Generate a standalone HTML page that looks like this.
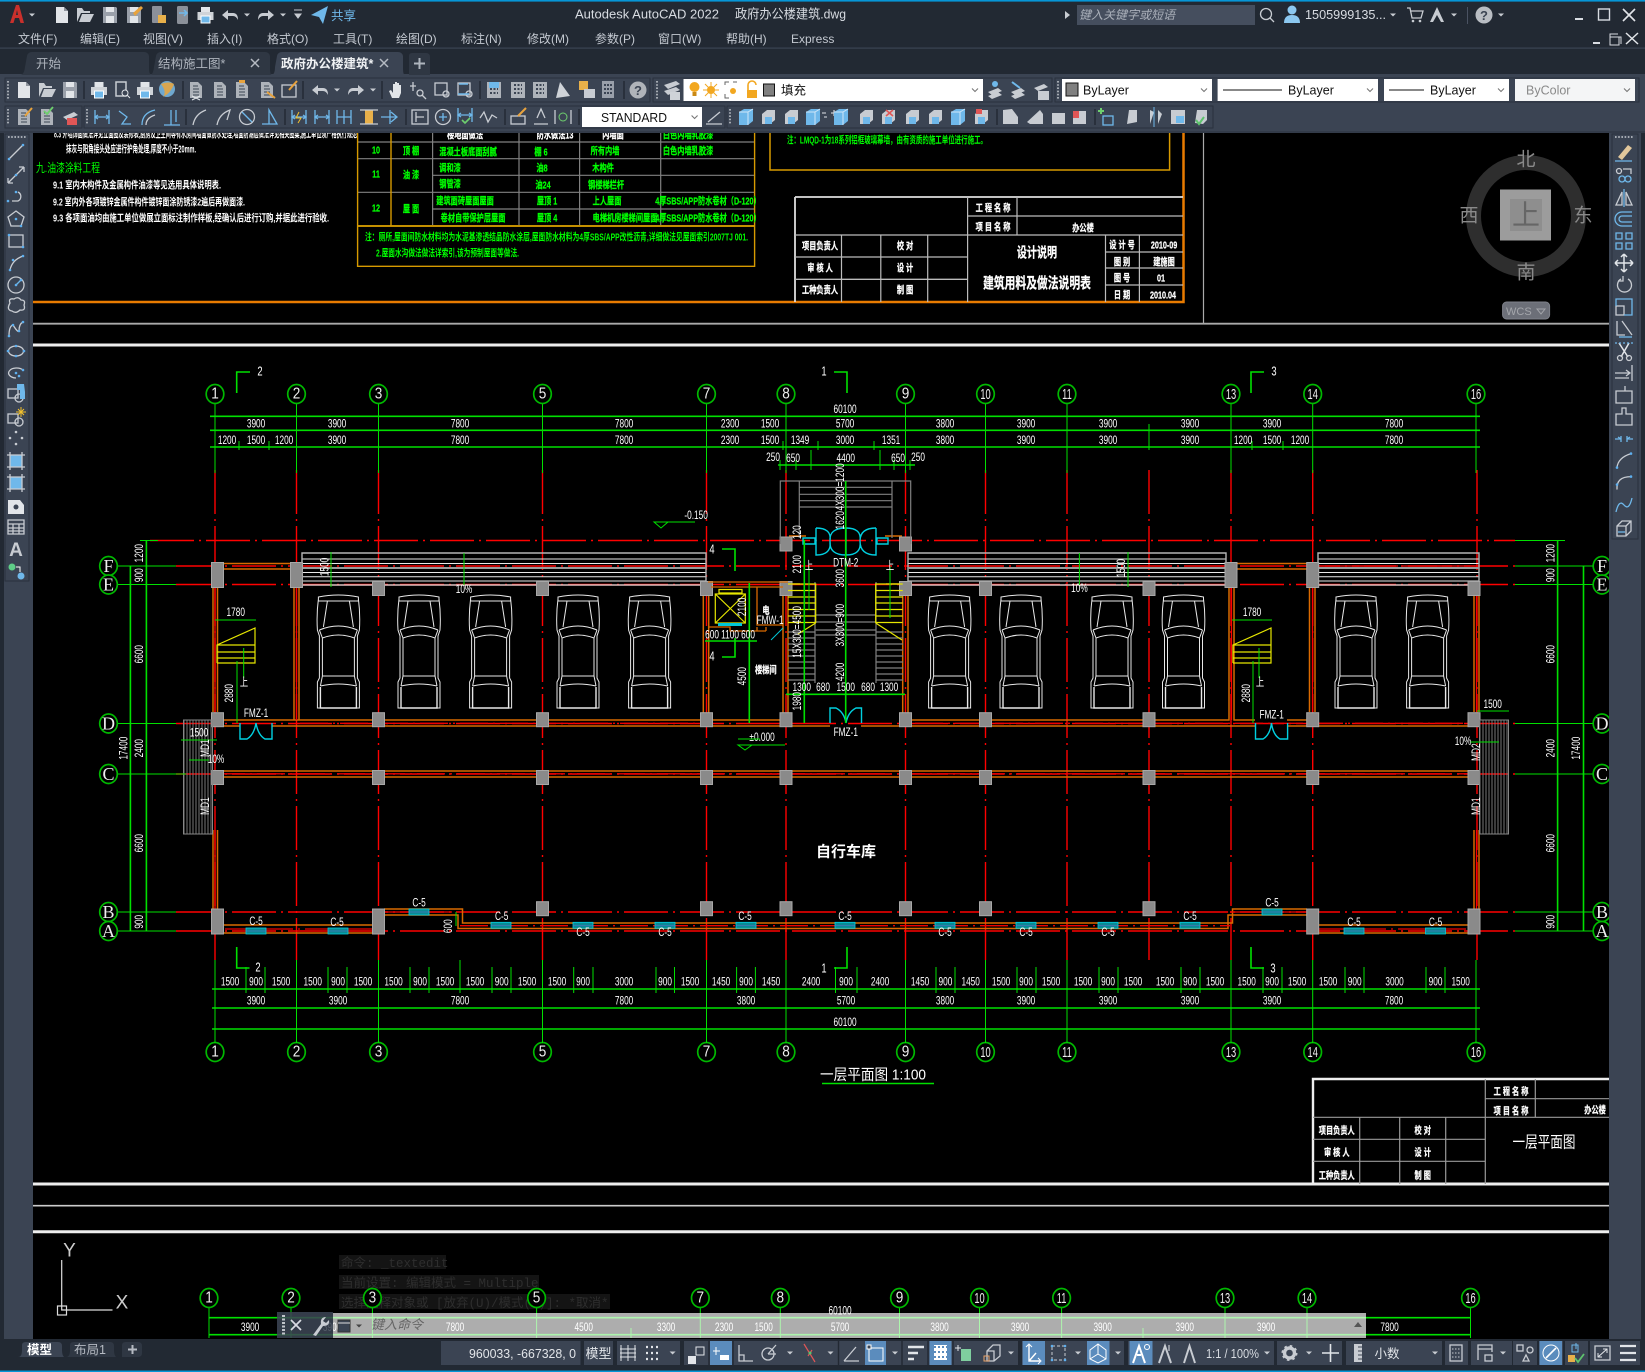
<!DOCTYPE html>
<html><head><meta charset="utf-8"><title>Autodesk AutoCAD 2022</title>
<style>
html,body{margin:0;padding:0;background:#000;width:1645px;height:1372px;overflow:hidden}
svg{display:block;font-family:"Liberation Sans","Noto Sans CJK SC",sans-serif}
.g{stroke:#00e000;fill:none;stroke-width:1.6}
.g1{stroke:#00e000;fill:none;stroke-width:1}
.r{stroke:#f00;fill:none;stroke-width:1.4;stroke-dasharray:44 5 2 5}
.o{stroke:#d96a00;fill:none;stroke-width:1.5}
.w{stroke:#e8e8e8;fill:none;stroke-width:1}
.gr{stroke:#808080;fill:none;stroke-width:1.2}
.y{stroke:#e6e600;fill:none;stroke-width:1.2}
.cy{stroke:#00d0e0;fill:none;stroke-width:1.4}
.d,.v,.t,.k,.bt,.bs,.lt{text-anchor:middle;dominant-baseline:central;transform-box:fill-box;transform-origin:center}
.d{font-size:11.5px;fill:#fff;transform:scaleX(.72)}
.v{font-size:11.5px;fill:#fff;transform:rotate(-90deg) scaleX(.72)}
.bt{font-size:16px;fill:#eee;transform:scaleX(.85)}
.bs{font-size:15px;fill:#eee;transform:scaleX(.62)}
.lt{font-family:"Liberation Serif",serif;font-size:18px;fill:#eee}
.t{font-size:10px;font-weight:700;fill:#0f0;stroke:#0f0;stroke-width:.25;transform:scaleX(.72)}
.k{font-size:10px;font-weight:700;fill:#fff;stroke:#fff;stroke-width:.25;transform:scaleX(.72)}
.l{font-size:10px;font-weight:700;dominant-baseline:central}
.i{fill:none;stroke:#c8ccd2;stroke-width:1.3}
.f{fill:#c8ccd2}
.wf{fill:#e2e5e9}
.bf{fill:#6fb8ea}
.bd{fill:none;stroke:#5fb0ef;stroke-width:2.6;stroke-linecap:round}
.bl{fill:none;stroke:#6fb8ea;stroke-width:1.3}
.mn{font-size:12px;fill:#c4c9d1}
.tb{fill:#3b4453;stroke:#2a313d;stroke-width:1}
.sp{stroke:#222933;stroke-width:1.4}
.cb{font-size:12.5px;fill:#111}
.st{font-size:13px;fill:#d8dce2}
</style></head><body>
<svg width="1645" height="1372" viewBox="0 0 1645 1372" xmlns="http://www.w3.org/2000/svg">
<defs>
<g id="b"><ellipse rx="8.8" ry="9.5" fill="#000" stroke="#00b800" stroke-width="1.7"/></g>
<g id="car" fill="none" stroke="#e8e8e8" stroke-width="1"><path d="M1 3Q21-1 41 3V7H1ZM1 5Q-1 20 0 36L2 42V84L0 88V114H42V88L40 84V42L42 36Q43 20 41 5M10 7L6 33M32 7L36 33M2 36Q21 28 40 36M5 44Q21 38 37 44M5 44V82M37 44V82M5 82H37M3 92Q21 88 39 92M3 92L5 82M39 92L37 82M2 36L5 44M40 36L37 44"/><path d="M3 93V114H39V93" stroke-width="1.4"/></g>
<g id="cs"><rect x="-6" y="-7" width="12" height="14" fill="#8a8a8a" stroke="#a8a8a8"/></g>
<g id="cb"><rect x="-6" y="-12.5" width="12" height="25" fill="#8a8a8a" stroke="#a8a8a8"/></g>
<g id="win"><rect width="20" height="6" fill="#0a8a94" stroke="#00d0e0" stroke-width=".8"/><path d="M0 3H20" stroke="#66c" stroke-width=".5"/></g>
<pattern id="st" width="3" height="10" patternUnits="userSpaceOnUse"><path d="M1 0V10" stroke="#777" stroke-width="1"/></pattern>
<g id="nw"><path d="M-6-8H2L6-4V8H-6Z" class="wf"/><path d="M2-8V-4H6Z" fill="#8f959e"/></g>
<g id="op"><path d="M-8 7V-7H-3L-1-4H5V-2H-4L-8 7ZM-6 7L-3-1H9L5 7Z" class="f"/></g>
<g id="sv"><path d="M-7-8H6L7-7V8H-7Z" fill="#9aa0aa"/><rect x="-4" y="-8" width="8" height="5" class="wf"/><rect x="-4" y="1" width="8" height="7" class="wf"/></g>
<g id="pr"><rect x="-4.5" y="-8" width="9" height="5" class="wf"/><rect x="-8" y="-3" width="16" height="8" fill="#cfd3d8"/><rect x="-4.5" y="1" width="9" height="7" class="bf" stroke="#fff"/></g>
<g id="un"><path d="M-8 0L-2-5V-2H3Q8-2 8 5Q6 1 3 1H-2V5Z" class="f"/></g>
<g id="re"><path d="M8 0L2-5V-2H-3Q-8-2-8 5Q-6 1-3 1H2V5Z" class="f"/></g>
<g id="ca"><path d="M-3-1.5H3L0 1.5Z" class="f"/></g>
<g id="ch"><path d="M-3-1.5L0 1.5L3-1.5" fill="none" stroke="#777" stroke-width="1.1"/></g>
<g id="ds"><rect x="-6" y="-8" width="10" height="14" fill="none" stroke="#c8ccd2" stroke-width="1.5"/><circle cx="3" cy="3" r="3" fill="#3b4453" stroke="#e2e5e9"/><path d="M5 5L8 8" stroke="#e2e5e9"/></g>
<g id="dc"><path d="M-6-8H2L6-4V8H-6Z" fill="#aeb3ba"/><path d="M-3-4H2M-3-1H3M-3 2H3M-3 5H3" stroke="#3b4453"/></g>
<g id="vp"><rect x="-7" y="-8" width="14" height="16" fill="#aeb3ba"/><path d="M-4-5H4M-4-1H4M-4 3H4" stroke="#3b4453" stroke-width="2" stroke-dasharray="2 1.5"/></g>
<g id="hd"><path d="M-4 8L-7 1L-5 0L-3 3V-6L-1-6V0V-8H1V0V-7H3V0V-5L5-5V3L3 8Z" class="wf"/></g>
<g id="tl"><path d="M-6-8V1M-9-4H-3" class="i"/><circle cx="1" cy="3" r="3" class="i"/><path d="M3 5L7 9" class="i"/></g>
<g id="rc"><rect x="-7" y="-7" width="12" height="12" class="i"/><circle cx="4" cy="4" r="3" class="i"/></g>
<g id="dm"><path d="M-7-7V7M7-7V7M-7 0H7" class="bl"/><path d="M-4-2L-7 0L-4 2M4-2L7 0L4 2" class="bl"/></g>
<g id="cube"><path d="M-7-5L-2-8H7V4L2 8H-7Z" fill="#6fb8ea"/><path d="M-7-5H2V8M2-5L7-8" fill="none" stroke="#cfe6f8"/></g>
<g id="cube2"><path d="M-7-3L-2-7H6V3L1 7H-7Z" class="f"/><path d="M-4 0H3V7H-4Z" class="bf"/></g>
</defs>
<rect width="1645" height="1372" fill="#000"/>

<!-- upper sheet -->
<g>
<path d="M33 302H1183.5V133" fill="none" stroke="#e87b00" stroke-width="2.5"/>
<path d="M33 323.7H1609" fill="none" stroke="#aaa" stroke-width="1.8"/>
<path d="M1203.5 133V323" fill="none" stroke="#aaa" stroke-width="1.2"/>
<path d="M33 345H1609" fill="none" stroke="#eee" stroke-width="3"/>
<path d="M770 133V170H1169.6V133" fill="none" stroke="#d79a00" stroke-width="1.5"/>
<text class="l" x="787" y="141" fill="#0f0" textLength="200" lengthAdjust="spacingAndGlyphs">注：LMQD-1为18系列铝框玻璃幕墙，由有资质的施工单位进行施工。</text>
<text class="l" x="54" y="135" fill="#fff" textLength="303" lengthAdjust="spacingAndGlyphs">8.3 外墙饰面做法详见立面图及装修表,厨房及卫生间等有水房间墙面做防水处理,墙面防潮层做法详见相关图集,施工单位须严格执行规范</text>
<text class="l" x="66" y="150" fill="#fff" textLength="130" lengthAdjust="spacingAndGlyphs">抹灰与阳角接头处应进行护角处理,厚度不小于20mm.</text>
<text class="l" x="36" y="168" fill="#0f0" textLength="64" lengthAdjust="spacingAndGlyphs" style="font-size:12px;font-weight:400">九.油漆涂料工程</text>
<text class="l" x="53" y="186" fill="#fff" textLength="168" lengthAdjust="spacingAndGlyphs">9.1 室内木构件及金属构件油漆等见选用具体说明表.</text>
<text class="l" x="53" y="203" fill="#fff" textLength="192" lengthAdjust="spacingAndGlyphs">9.2 室内外各项镀锌金属件构件镀锌面涂防锈漆2遍后再做面漆.</text>
<text class="l" x="53" y="219" fill="#fff" textLength="276" lengthAdjust="spacingAndGlyphs">9.3 各项面油均由施工单位做展立面标注制作样板,经确认后进行订购,并据此进行验收.</text>
<path d="M357.6 142H754.6M357.6 158.7H754.6M432.6 175.3H754.6M357.6 192.3H754.6M432.6 209H754.6M432.6 133V226M519 133V226M579.6 133V226M660.7 133V226" class="gr"/>
<path d="M357.6 226H754.6" stroke="#c49000" stroke-width="2"/>
<path d="M357.6 133V266.3H754.6V133M391 133V226" fill="none" stroke="#d79a00" stroke-width="1.4"/>
<text class="k" x="465" y="135">楼地面做法</text><text class="k" x="555" y="135">防水做法13</text><text class="k" x="613" y="135">内墙面</text><text class="t" x="688" y="135">白色内墙乳胶漆</text>
<text class="t" x="376" y="150">10</text><text class="t" x="411" y="151">顶 棚</text><text class="t" x="468" y="152">混凝土板底面刮腻</text><text class="t" x="541" y="152">棚 6</text><text class="t" x="605" y="151">所有内墙</text><text class="t" x="688" y="151">白色内墙乳胶漆</text>
<text class="t" x="376" y="174">11</text><text class="t" x="411" y="175">油 漆</text><text class="t" x="450" y="168">调和漆</text><text class="t" x="542" y="168">油8</text><text class="t" x="603" y="168">木构件</text><text class="t" x="450" y="184">钢管漆</text><text class="t" x="543" y="185">油24</text><text class="t" x="606" y="185">钢楼梯栏杆</text>
<text class="t" x="376" y="208">12</text><text class="t" x="411" y="209">屋 面</text><text class="t" x="465" y="201">建筑面砖屋面屋面</text><text class="t" x="547" y="201">屋顶 1</text><text class="t" x="607" y="201">上人屋面</text><text class="t" x="708" y="201">4厚SBS/APP防水卷材（D-120）</text>
<text class="t" x="473" y="218">卷材自带保护层屋面</text><text class="t" x="547" y="218">屋顶 4</text><text class="t" x="625" y="218">电梯机房楼梯间屋面</text><text class="t" x="708" y="218">4厚SBS/APP防水卷材（D-120）</text>
<text class="l" x="365" y="238" fill="#0f0" textLength="383" lengthAdjust="spacingAndGlyphs">注：厕所,屋面间防水材料均为水泥基渗透结晶防水涂层,屋面防水材料为4厚SBS/APP改性沥青,详细做法见屋面索引2007TJ 001.</text>
<text class="l" x="376" y="254" fill="#0f0" textLength="143" lengthAdjust="spacingAndGlyphs">2.屋面水沟做法做法详索引,该为预制屋面等做法.</text>
<!-- top title block -->
<path d="M795 197H1183M795 197V302" fill="none" stroke="#ddd" stroke-width="1.8"/>
<path d="M967.6 216H1183M795 235H1183M795 257H967.6M795 279.3H967.6M1105.5 252H1183M1105.5 268H1183M1105.5 285H1183" fill="none" stroke="#bbb" stroke-width="1.3"/>
<path d="M967.6 197V302M1017 197V235M841.5 235V302M880.8 235V302M927.7 235V302M1105.5 235V302M1139.4 235V302" fill="none" stroke="#bbb" stroke-width="1.2"/>
<text class="k" x="993" y="208">工 程 名 称</text><text class="k" x="993" y="227">项 目 名 称</text><text class="k" x="1083" y="228">办公楼</text>
<text class="k" x="820" y="246">项目负责人</text><text class="k" x="820" y="268">审 核 人</text><text class="k" x="820" y="290">工种负责人</text>
<text class="k" x="905" y="246">校 对</text><text class="k" x="905" y="268">设 计</text><text class="k" x="905" y="290">制 图</text>
<text class="k" x="1037" y="253" style="font-size:14px">设计说明</text><text class="k" x="1037" y="283" style="font-size:15px">建筑用料及做法说明表</text>
<text class="k" x="1122" y="245">设 计 号</text><text class="k" x="1122" y="262">图 别</text><text class="k" x="1122" y="278">图 号</text><text class="k" x="1122" y="295">日 期</text>
<text class="k" x="1164" y="245">2010-09</text><text class="k" x="1164" y="262">建施图</text><text class="k" x="1161" y="278">01</text><text class="k" x="1163" y="295">2010.04</text>
</g>

<!-- axis lines -->
<path class="r" d="M215 470V960M296.5 470V960M378.5 470V960M542.5 470V960M706.5 470V960M786 470V960M905.5 470V960M985.5 470V960M1067 470V960M1149 470V960M1231 470V960M1312.7 470V960M1477 470V960"/>
<path class="r" d="M150 540.5H1515M176 566H1515M176 584.5H1515M176 723.5H1515M176 774H1515M176 912H1515M176 931H1515"/>
<!-- green verticals top -->
<path class="g1" d="M215 404V473M296.5 404V473M378.5 404V473M542.5 404V473M706.5 404V473M786 404V473M905.5 404V473M985.5 404V473M1067 404V473M1231 404V473M1312.7 404V473M1476 404V473M1149 424V450"/>
<path class="g" d="M210 416.3H1480M210 430.3H1480M210 447H1480M778 465H915"/>
<path class="g1" d="M239 441V450M269 441V450M783 441V450M818 441V450M874 441V450M1252 441V450M1283 441V450M780 460V470M796 460V470M811 460V470M880 460V470M894 460V470M910 460V470M811 450V470M880 450V470"/>
<g><use href="#b" x="215" y="394"/><use href="#b" x="296.5" y="394"/><use href="#b" x="378.5" y="394"/><use href="#b" x="542.5" y="394"/><use href="#b" x="706.5" y="394"/><use href="#b" x="786" y="394"/><use href="#b" x="905.5" y="394"/><use href="#b" x="985.5" y="394"/><use href="#b" x="1067" y="394"/><use href="#b" x="1231" y="394"/><use href="#b" x="1312.7" y="394"/><use href="#b" x="1476" y="394"/>
<use href="#b" x="215" y="1052"/><use href="#b" x="296.5" y="1052"/><use href="#b" x="378.5" y="1052"/><use href="#b" x="542.5" y="1052"/><use href="#b" x="706.5" y="1052"/><use href="#b" x="786" y="1052"/><use href="#b" x="905.5" y="1052"/><use href="#b" x="985.5" y="1052"/><use href="#b" x="1067" y="1052"/><use href="#b" x="1231" y="1052"/><use href="#b" x="1312.7" y="1052"/><use href="#b" x="1476" y="1052"/></g>
<g>
<text class="bt" x="215" y="394">1</text><text class="bt" x="296.5" y="394">2</text><text class="bt" x="378.5" y="394">3</text><text class="bt" x="542.5" y="394">5</text><text class="bt" x="706.5" y="394">7</text><text class="bt" x="786" y="394">8</text><text class="bt" x="905.5" y="394">9</text><text class="bs" x="985.5" y="394">10</text><text class="bs" x="1067" y="394">11</text><text class="bs" x="1231" y="394">13</text><text class="bs" x="1312.7" y="394">14</text><text class="bs" x="1476" y="394">16</text>
<text class="bt" x="215" y="1052">1</text><text class="bt" x="296.5" y="1052">2</text><text class="bt" x="378.5" y="1052">3</text><text class="bt" x="542.5" y="1052">5</text><text class="bt" x="706.5" y="1052">7</text><text class="bt" x="786" y="1052">8</text><text class="bt" x="905.5" y="1052">9</text><text class="bs" x="985.5" y="1052">10</text><text class="bs" x="1067" y="1052">11</text><text class="bs" x="1231" y="1052">13</text><text class="bs" x="1312.7" y="1052">14</text><text class="bs" x="1476" y="1052">16</text>
</g>
<!-- top dim text -->
<g>
<text class="d" x="845" y="410">60100</text>
<text class="d" x="256" y="424.5">3900</text><text class="d" x="337" y="424.5">3900</text><text class="d" x="460" y="424.5">7800</text><text class="d" x="624" y="424.5">7800</text><text class="d" x="730" y="424.5">2300</text><text class="d" x="770" y="424.5">1500</text><text class="d" x="845" y="424.5">5700</text><text class="d" x="945" y="424.5">3800</text><text class="d" x="1026" y="424.5">3900</text><text class="d" x="1108" y="424.5">3900</text><text class="d" x="1190" y="424.5">3900</text><text class="d" x="1272" y="424.5">3900</text><text class="d" x="1394" y="424.5">7800</text>
<text class="d" x="227" y="441">1200</text><text class="d" x="256" y="441">1500</text><text class="d" x="284" y="441">1200</text><text class="d" x="337" y="441">3900</text><text class="d" x="460" y="441">7800</text><text class="d" x="624" y="441">7800</text><text class="d" x="730" y="441">2300</text><text class="d" x="770" y="441">1500</text><text class="d" x="800" y="441">1349</text><text class="d" x="845" y="441">3000</text><text class="d" x="891" y="441">1351</text><text class="d" x="945" y="441">3800</text><text class="d" x="1026" y="441">3900</text><text class="d" x="1108" y="441">3900</text><text class="d" x="1190" y="441">3900</text><text class="d" x="1243" y="441">1200</text><text class="d" x="1272" y="441">1500</text><text class="d" x="1300" y="441">1200</text><text class="d" x="1394" y="441">7800</text>
<text class="d" x="773" y="458">250</text><text class="d" x="793" y="459">650</text><text class="d" x="845.7" y="459">4400</text><text class="d" x="898" y="459">650</text><text class="d" x="918" y="458">250</text>
</g>
<!-- section marks -->
<path class="g" d="M236.7 393V372H250M834 372H847V393M1251 393V372H1264M722 549H735V571M722 657H735V638M236.7 947V968H249.5M834 968H847V947M1251 947V968H1264"/>
<g>
<text class="d" x="260" y="372" style="font-size:13px">2</text><text class="d" x="824" y="372" style="font-size:13px">1</text><text class="d" x="1274" y="372" style="font-size:13px">3</text>
<text class="d" x="258" y="968" style="font-size:13px">2</text><text class="d" x="824" y="969" style="font-size:13px">1</text><text class="d" x="1273" y="969" style="font-size:13px">3</text>
<text class="d" x="712" y="550" style="font-size:13px">4</text><text class="d" x="712" y="657" style="font-size:13px">4</text>
</g>
<!-- eaves -->
<g class="w"><path d="M302 559H706M302 563.5H706M302 572.5H706M302 576.7H706M302 581H706M908 559H1226M908 563.5H1226M908 572.5H1226M908 576.7H1226M908 581H1226M1318 559H1479M1318 563.5H1479M1318 572.5H1479M1318 576.7H1479M1318 581H1479"/></g>
<path d="M302 553H706V585H302ZM908 553H1226V585H908ZM1318 553H1479V585H1318Z" fill="none" stroke="#b5b5b5" stroke-width="1.4"/>
<path d="M302 568H706M908 568H1226M1318 568H1479" stroke="#999" stroke-width="2"/>
<path d="M302 585H706M908 585H1226M1318 585H1479" stroke="#f5c8c8" stroke-width="1"/>
<path d="M1325 566H1470" stroke="#f00" stroke-width="1.2" stroke-dasharray="34 5"/>
<!-- walls -->
<g class="o">
<path d="M223 563.5H291M223 569H291M1237 563.5H1307M1237 569H1307"/>
<path d="M213 587V712M217.5 587V712M294 587V720H217M299 587V720H706M217 726H240M272 726H700M272 720H299"/>
<path d="M1229 587V720H1149M1234 587V720H1255M1287 720H1307M1309.5 587V712M1315 587V712M1255 726H1150M1287 726H1470M1474 590V712M1479 590V712"/>
<path d="M711 720H783M711 726H830M861 726H900M912 720H1143M912 726H1150M703.3 582V714M708.7 582V714M783 582V714M788 582V714M902.7 582V714M908 582V714"/>
<path d="M215 771H1470M215 777H1470"/>
<path d="M213 830V909M217.5 830V909M1474 830V909M1479 830V909M223 925H373M223 933H373M384 909H462.5V923H1232.5V909H1307M384 915H458V928.5H1228V915H1307M1318 925H1470M1318 933H1470"/>
<path d="M789 536H806M885 536H902M792 584H800M886 584H902"/>
</g>
<path d="M215 587V712M296.5 587V720M1231.5 587V720M1312.5 587V712M1476.5 590V712M215 830V909M1476.5 830V909" stroke="#f00" stroke-width="1.3" fill="none"/>
<path d="M300 723.3H700M217 773.8H1470M915 723.3H1470M225 929H373M384 912H460M460 925.7H1230M1230 912H1307M1318 929H1470" stroke="#e00" stroke-width="1.3" fill="none" stroke-dasharray="28 5 2 5"/>
<!-- cars -->
<use href="#car" x="317.4" y="594"/><use href="#car" x="398" y="594"/><use href="#car" x="469.6" y="594"/><use href="#car" x="557" y="594"/><use href="#car" x="628.6" y="594"/><use href="#car" x="928.6" y="594"/><use href="#car" x="1000" y="594"/><use href="#car" x="1091" y="594"/><use href="#car" x="1162.5" y="594"/><use href="#car" x="1335" y="594"/><use href="#car" x="1406.6" y="594"/>
<!-- columns -->
<use href="#cb" x="217.5" y="575"/><use href="#cb" x="296.5" y="575"/><use href="#cb" x="1231" y="575"/><use href="#cb" x="1312.7" y="575"/><use href="#cb" x="217.5" y="921.5"/><use href="#cb" x="378.5" y="921.5"/><use href="#cb" x="1312.7" y="921.5"/><use href="#cb" x="1474" y="921.5"/>
<use href="#cs" x="378.5" y="588.5"/><use href="#cs" x="542.5" y="588.5"/><use href="#cs" x="706.5" y="588.5"/><use href="#cs" x="786" y="588.5"/><use href="#cs" x="905.5" y="588.5"/><use href="#cs" x="985.5" y="588.5"/><use href="#cs" x="1149" y="588.5"/><use href="#cs" x="1474" y="588.5"/>
<use href="#cs" x="786" y="544"/><use href="#cs" x="905.5" y="544"/>
<use href="#cs" x="217.5" y="719.7"/><use href="#cs" x="378.5" y="719.7"/><use href="#cs" x="542.5" y="719.7"/><use href="#cs" x="706.5" y="719.7"/><use href="#cs" x="786" y="719.7"/><use href="#cs" x="905.5" y="719.7"/><use href="#cs" x="985.5" y="719.7"/><use href="#cs" x="1149" y="719.7"/><use href="#cs" x="1312.7" y="719.7"/><use href="#cs" x="1474" y="719.7"/>
<use href="#cs" x="217.5" y="777.5"/><use href="#cs" x="378.5" y="777.5"/><use href="#cs" x="542.5" y="777.5"/><use href="#cs" x="706.5" y="777.5"/><use href="#cs" x="786" y="777.5"/><use href="#cs" x="905.5" y="777.5"/><use href="#cs" x="985.5" y="777.5"/><use href="#cs" x="1149" y="777.5"/><use href="#cs" x="1312.7" y="777.5"/><use href="#cs" x="1474" y="777.5"/>
<use href="#cs" x="542.5" y="908.7"/><use href="#cs" x="706.5" y="908.7"/><use href="#cs" x="786" y="908.7"/><use href="#cs" x="905.5" y="908.7"/><use href="#cs" x="985.5" y="908.7"/><use href="#cs" x="1149" y="908.7"/>
<!-- windows -->
<use href="#win" x="246" y="928"/><use href="#win" x="328" y="928"/><use href="#win" x="409" y="909"/><use href="#win" x="491" y="922.3"/><use href="#win" x="573" y="922.3"/><use href="#win" x="655" y="922.3"/><use href="#win" x="736" y="922.3"/><use href="#win" x="835" y="922.3"/><use href="#win" x="935" y="922.3"/><use href="#win" x="1016" y="922.3"/><use href="#win" x="1098" y="922.3"/><use href="#win" x="1180" y="922.3"/><use href="#win" x="1262" y="909"/><use href="#win" x="1344" y="928"/><use href="#win" x="1425.5" y="928"/>
<g>
<text class="d" x="419" y="903.5">C-5</text><text class="d" x="256" y="922">C-5</text><text class="d" x="337" y="923">C-5</text><text class="d" x="501.6" y="917">C-5</text><text class="d" x="583" y="933">C-5</text><text class="d" x="665" y="933">C-5</text><text class="d" x="745" y="917">C-5</text><text class="d" x="845" y="917">C-5</text><text class="d" x="945" y="933">C-5</text><text class="d" x="1026" y="933">C-5</text><text class="d" x="1108" y="933">C-5</text><text class="d" x="1190" y="917">C-5</text><text class="d" x="1272" y="903.5">C-5</text><text class="d" x="1354" y="923">C-5</text><text class="d" x="1435.5" y="923">C-5</text>
</g>
<!-- left/right steps -->
<rect x="183.5" y="720" width="29" height="114" fill="url(#st)" stroke="#888"/>
<rect x="1479.5" y="720" width="29" height="114" fill="url(#st)" stroke="#888"/>
<!-- yellow stairs -->
<path class="y" d="M217 663H255V628L217 645V663M217 652H255M217 658H255M217 645H255M1233 663H1271V628L1233 645V663M1233 652H1271M1233 658H1271M1233 645H1271"/>
<path class="g1" d="M243.7 648V678M237 661V723M1259 648V678M1253 661V723M215 620H256M1232 620H1272M181 740H217M189 760H209M1477 711H1509M1470 742H1499"/>
<!-- doors -->
<path class="cy" d="M240 723V739H247Q254 735 256 723M272 723V739H265Q258 735 256 723M1255.5 723V739H1263Q1270 735 1271.5 723M1287.6 723V739H1280Q1273 735 1271.5 723M830 723V708H836Q844 712 846 723M861.5 723V708H856Q848 712 846 723"/>
<path class="cy" d="M816 528Q832 528 830 541Q832 555 816 555V528M846 528Q829 528 830 541Q829 555 846 555V528M846 528Q862 528 860 541Q862 555 846 555M876 528Q860 528 860 541Q860 555 876 555V528M803 538H815V544H803ZM877 538H888V544H877Z"/>
<!-- central stair -->
<path class="gr" d="M780.3 544V481H910.7V544M799.3 481V538M892 481V538M799.3 487.3H892M799.3 494.3H892M799.3 500.7H892M799.3 507H892M815.7 615H875.7M815.7 622H875.7M815.7 630H875.7M815.7 635H875.7" stroke-width="1.4"/>
<path class="gr" d="M815 582V683M876 582V683M788 632H815M788 638H815M788 644H815M788 650H815M788 656H815M788 662H815M788 668H815M788 674H815M788 680H815M876 632H903M876 638H903M876 644H903M876 650H903M876 656H903M876 662H903M876 668H903M876 674H903M876 680H903"/>
<path class="y" d="M788 584H815.7V623M788 590.5H815.7M788 597H815.7M788 603H815.7M788 609.5H815.7M788 616H815.7M788 622.5H815.7M815.7 623L798 634M902.7 584H875.7V623M902.7 590.5H875.7M902.7 597H875.7M902.7 603H875.7M902.7 609.5H875.7M902.7 616H875.7M902.7 622.5H875.7M875.7 623L902 640"/>
<path class="g" d="M845.7 481V723M804.3 540V723M786 694.3H905"/>
<path class="g1" d="M809 566V610M890 566V618"/>
<!-- elevator -->
<path d="M708 582H788M711 587H783M708 627H730V631H766M757 627V631M757 587V625H783M766 631V627" stroke="#d96a00" fill="none" stroke-width="1.3"/>
<rect x="715.3" y="594" width="30" height="29" class="y"/><path class="y" d="M715.3 594L745.3 623M745.3 594L715.3 623"/><rect x="719" y="589.5" width="23" height="3.5" class="y"/>
<rect x="718" y="623" width="24" height="3" fill="#00c8d8"/>
<path class="g" d="M705 641H757M749.3 583V723"/>
<path stroke="#00c8d8" d="M771 640L783 628" stroke-width="1"/>
<!-- misc dim text -->
<g>
<text class="d" x="235.7" y="613">1780</text><text class="d" x="1252" y="613">1780</text>
<text class="d" x="256" y="714">FMZ-1</text><text class="d" x="1271.6" y="715.7">FMZ-1</text><text class="d" x="845.7" y="733">FMZ-1</text><text class="d" x="845.7" y="563.5">DTM-2</text>
<text class="d" x="199" y="733.7">1500</text><text class="d" x="1492.6" y="705">1500</text>
<text class="d" x="216" y="760">10%</text><text class="d" x="1463" y="742">10%</text><text class="d" x="464" y="590">10%</text><text class="d" x="1079.4" y="589">10%</text>
<text class="d" x="712" y="635.7">600</text><text class="d" x="730" y="635.7">1100</text><text class="d" x="748" y="635.7">600</text>
<text class="d" x="801.7" y="688">1300</text><text class="d" x="823" y="688">680</text><text class="d" x="845.7" y="688">1500</text><text class="d" x="868" y="688">680</text><text class="d" x="889" y="688">1300</text>
<text class="d" x="696" y="516" >-0.150</text><text class="d" x="762" y="738">±0.000</text>
<text class="v" x="140" y="553">1200</text><text class="v" x="140" y="575">900</text><text class="v" x="140" y="654">6600</text><text class="v" x="140" y="748">2400</text><text class="v" x="140" y="843">6600</text><text class="v" x="140" y="921.6">900</text><text class="v" x="124.5" y="748">17400</text>
<text class="v" x="1551.4" y="553">1200</text><text class="v" x="1551.4" y="575">900</text><text class="v" x="1551.4" y="654">6600</text><text class="v" x="1551.4" y="748">2400</text><text class="v" x="1551.4" y="843">6600</text><text class="v" x="1551.4" y="921.6">900</text><text class="v" x="1577" y="748">17400</text>
<text class="v" x="325.4" y="566.7">1500</text><text class="v" x="1122" y="568">1500</text>
<text class="v" x="230" y="693">2880</text><text class="v" x="1247" y="693">2880</text>
<text class="v" x="206" y="748">MD1</text><text class="v" x="206" y="806">MD1</text><text class="v" x="1477" y="752">MD2</text><text class="v" x="1477" y="806">MD1</text>
<text class="v" x="743" y="606.7">2100</text><text class="v" x="743" y="676">4500</text><text class="v" x="798" y="564">2100</text><text class="v" x="798" y="532">120</text><text class="v" x="841" y="486.7">4X300=1200</text><text class="v" x="841" y="520">1620</text><text class="v" x="841" y="578">3600</text><text class="v" x="841" y="625">3X300=900</text><text class="v" x="841" y="671.7">4200</text><text class="v" x="798" y="631.7">15X300=4500</text><text class="v" x="798" y="701">1980</text><text class="v" x="449" y="926">600</text>
<text class="k" x="765.7" y="670">楼梯间</text><text class="k" x="766" y="610.7">电</text><text class="d" x="770" y="621">FMW-1</text>
<text class="d" x="809" y="566.7">上</text><text class="d" x="890" y="566.7">上</text><text class="d" x="244" y="683">上</text><text class="d" x="1260" y="683">上</text>
<text x="846" y="852" text-anchor="middle" dominant-baseline="central" fill="#fff" font-weight="700" font-size="15">自行车库</text>
<text x="873" y="1075" text-anchor="middle" dominant-baseline="central" fill="#fff" font-size="15" textLength="106" lengthAdjust="spacingAndGlyphs">一层平面图 1:100</text>
</g>
<path class="g" d="M822 1083.5H934"/><path class="g1" d="M654 522H668L661 528ZM668 522H695M738 739H760M738 745H752L745 750ZM752 745H785" stroke-width="1"/>
<path class="g1" d="M331 552V587M464 553V585M1079.4 553V585M1128 552V587M456 912V926"/>
<!-- side dims -->
<path class="g" d="M146.4 540V931M130.4 566V931M1557.6 540V931M1583.5 566V931"/>
<path class="g1" d="M110 566H176M110 584.5H176M110 723.5H176M110 774H186M110 912H176M110 931H176M1515 566H1593M1515 584.5H1593M1515 723.5H1593M1515 774H1593M1515 912H1593M1515 931H1593M140 540.5H158M1515 540.5H1565" stroke-width="1.4"/>
<g><use href="#b" x="108.5" y="566"/><use href="#b" x="108.5" y="584.5"/><use href="#b" x="108.5" y="723.5"/><use href="#b" x="108.5" y="774"/><use href="#b" x="108.5" y="912"/><use href="#b" x="108.5" y="931"/><use href="#b" x="1602" y="566"/><use href="#b" x="1602" y="584.5"/><use href="#b" x="1602" y="723.5"/><use href="#b" x="1602" y="774"/><use href="#b" x="1602" y="912"/><use href="#b" x="1602" y="931"/></g>
<g><text class="lt" x="108.5" y="566">F</text><text class="lt" x="108.5" y="584.5">E</text><text class="lt" x="108.5" y="723.5">D</text><text class="lt" x="108.5" y="774">C</text><text class="lt" x="108.5" y="912">B</text><text class="lt" x="108.5" y="931">A</text><text class="lt" x="1602" y="566">F</text><text class="lt" x="1602" y="584.5">E</text><text class="lt" x="1602" y="723.5">D</text><text class="lt" x="1602" y="774">C</text><text class="lt" x="1602" y="912">B</text><text class="lt" x="1602" y="931">A</text></g>
<!-- bottom dims -->
<path class="g" d="M212 989H1480M212 1008H1480M212 1029H1480"/>
<path class="g1" d="M215 960V1043M296.5 960V1043M378.5 960V1043M542.5 960V1043M706.5 960V1043M786 960V1043M905.5 960V1043M985.5 960V1043M1067 960V1043M1231 960V1043M1312.7 960V1043M1476 960V1043M246 967V993M265 967V993M328 967V993M347 967V993M410 967V993M429 967V993M460 960V993M492 967V993M511 967V993M573.7 967V993M593 967V993M656 967V993M674.5 967V993M736.6 967V993M755.4 967V993M835.5 967V993M857 967V993M936 967V993M955 967V993M1017 967V993M1036 967V993M1099 967V993M1118 967V993M1181 967V993M1200 967V993M1263 967V993M1282 967V993M1345 967V993M1364 967V993M1426 967V993M1445 967V993"/>
<g>
<text class="d" x="230" y="982.7">1500</text><text class="d" x="256" y="982.7">900</text><text class="d" x="281" y="982.7">1500</text><text class="d" x="312.7" y="982.7">1500</text><text class="d" x="338" y="982.7">900</text><text class="d" x="363" y="982.7">1500</text><text class="d" x="393.5" y="982.7">1500</text><text class="d" x="420" y="982.7">900</text><text class="d" x="445" y="982.7">1500</text><text class="d" x="475" y="982.7">1500</text><text class="d" x="501.6" y="982.7">900</text><text class="d" x="527" y="982.7">1500</text><text class="d" x="557" y="982.7">1500</text><text class="d" x="583" y="982.7">900</text><text class="d" x="624" y="982.7">3000</text><text class="d" x="665" y="982.7">900</text><text class="d" x="690" y="982.7">1500</text><text class="d" x="721" y="982.7">1450</text><text class="d" x="746" y="982.7">900</text><text class="d" x="771" y="982.7">1450</text><text class="d" x="811" y="982.7">2400</text><text class="d" x="846" y="982.7">900</text><text class="d" x="880" y="982.7">2400</text><text class="d" x="920" y="982.7">1450</text><text class="d" x="945.4" y="982.7">900</text><text class="d" x="970.6" y="982.7">1450</text><text class="d" x="1001" y="982.7">1500</text><text class="d" x="1026" y="982.7">900</text><text class="d" x="1051" y="982.7">1500</text><text class="d" x="1083" y="982.7">1500</text><text class="d" x="1108" y="982.7">900</text><text class="d" x="1133" y="982.7">1500</text><text class="d" x="1165" y="982.7">1500</text><text class="d" x="1190" y="982.7">900</text><text class="d" x="1215" y="982.7">1500</text><text class="d" x="1246.6" y="982.7">1500</text><text class="d" x="1272" y="982.7">900</text><text class="d" x="1297" y="982.7">1500</text><text class="d" x="1328" y="982.7">1500</text><text class="d" x="1354.6" y="982.7">900</text><text class="d" x="1394.5" y="982.7">3000</text><text class="d" x="1435.5" y="982.7">900</text><text class="d" x="1460.6" y="982.7">1500</text>
<text class="d" x="256" y="1001.7">3900</text><text class="d" x="338" y="1001.7">3900</text><text class="d" x="460" y="1001.7">7800</text><text class="d" x="624" y="1001.7">7800</text><text class="d" x="746" y="1001.7">3800</text><text class="d" x="846" y="1001.7">5700</text><text class="d" x="945" y="1001.7">3800</text><text class="d" x="1026" y="1001.7">3900</text><text class="d" x="1108" y="1001.7">3900</text><text class="d" x="1190" y="1001.7">3900</text><text class="d" x="1272" y="1001.7">3900</text><text class="d" x="1394" y="1001.7">7800</text>
<text class="d" x="845" y="1023">60100</text>
</g>
<!-- bottom title block -->
<path d="M1313 1184V1079H1609" fill="none" stroke="#eee" stroke-width="2.4"/>
<path d="M33 1184H1609M33 1231.7H1609" stroke="#eee" stroke-width="3"/>
<path d="M33 1205.7H1609" stroke="#ccc" stroke-width="1.6"/>
<path d="M1485.3 1079V1184M1535.3 1079V1117M1485 1098.7H1609M1313 1117.3H1609M1313 1139.3H1485M1313 1161.3H1485M1359.7 1117V1184M1399.7 1117V1184M1445.7 1117V1184" fill="none" stroke="#999" stroke-width="1.2"/>
<text class="k" x="1511" y="1091.7">工 程 名 称</text><text class="k" x="1511" y="1111">项 目 名 称</text><text class="k" x="1595" y="1110">办公楼</text>
<text class="k" x="1336.7" y="1130.7">项目负责人</text><text class="k" x="1336.7" y="1152.7">审 核 人</text><text class="k" x="1336.7" y="1175.7">工种负责人</text>
<text class="k" x="1422.7" y="1130.7">校 对</text><text class="k" x="1422.7" y="1152.7">设 计</text><text class="k" x="1422.7" y="1175.7">制 图</text>
<text x="1544" y="1143" text-anchor="middle" dominant-baseline="central" fill="#fff" font-size="16" textLength="63" lengthAdjust="spacingAndGlyphs">一层平面图</text>
<!-- command history (behind the lower plan) -->
<g font-size="12.5" fill="#2e2e2e"><rect x="339" y="1255" width="107" height="14" fill="#141414"/><rect x="339" y="1275" width="200" height="14" fill="#141414"/><rect x="339" y="1294" width="271" height="15" fill="#141414"/>
<text x="341" y="1267" style="font-family:'Liberation Mono','Noto Sans CJK SC',monospace">命令: _textedit</text><text x="341" y="1287" style="font-family:'Liberation Mono','Noto Sans CJK SC',monospace">当前设置: 编辑模式 = Multiple</text><text x="341" y="1307" style="font-family:'Liberation Mono','Noto Sans CJK SC',monospace">选择注释对象或 [放弃(U)/模式(M)]: *取消*</text></g>
<!-- lower repeat plan -->
<path class="g" d="M209 1317.7H1470.5M209 1334.7H1470.5"/>
<path class="g1" d="M209 1307V1338M291 1307V1338M372.4 1307V1338M536.6 1307V1338M700.3 1307V1338M780.3 1307V1338M899.5 1307V1338M979.5 1307V1338M1061.6 1307V1338M1225 1307V1338M1307 1307V1338M1470.5 1307V1338M631 1328V1338M1143 1328V1338"/>
<use href="#b" x="209" y="1298"/><use href="#b" x="291" y="1298"/><use href="#b" x="372.4" y="1298"/><use href="#b" x="536.6" y="1298"/><use href="#b" x="700.3" y="1298"/><use href="#b" x="780.3" y="1298"/><use href="#b" x="899.5" y="1298"/><use href="#b" x="979.5" y="1298"/><use href="#b" x="1061.6" y="1298"/><use href="#b" x="1225" y="1298"/><use href="#b" x="1307" y="1298"/><use href="#b" x="1470.5" y="1298"/>
<g><text class="bt" x="209" y="1298">1</text><text class="bt" x="291" y="1298">2</text><text class="bt" x="372.4" y="1298">3</text><text class="bt" x="536.6" y="1298">5</text><text class="bt" x="700.3" y="1298">7</text><text class="bt" x="780.3" y="1298">8</text><text class="bt" x="899.5" y="1298">9</text><text class="bs" x="979.5" y="1298">10</text><text class="bs" x="1061.6" y="1298">11</text><text class="bs" x="1225" y="1298">13</text><text class="bs" x="1307" y="1298">14</text><text class="bs" x="1470.5" y="1298">16</text>
<text class="d" x="250" y="1328">3900</text><text class="d" x="332" y="1328">3900</text><text class="d" x="455" y="1328">7800</text><text class="d" x="583.7" y="1328">4500</text><text class="d" x="666" y="1328">3300</text><text class="d" x="724" y="1328">2300</text><text class="d" x="763.6" y="1328">1500</text><text class="d" x="840" y="1328">5700</text><text class="d" x="939.5" y="1328">3800</text><text class="d" x="1020" y="1328">3900</text><text class="d" x="1102.6" y="1328">3900</text><text class="d" x="1184.7" y="1328">3900</text><text class="d" x="1266" y="1328">3900</text><text class="d" x="1389.5" y="1328">7800</text><text class="d" x="840" y="1311.7">60100</text></g>
<!-- UCS -->
<path d="M61.7 1260V1310H112.5" fill="none" stroke="#ddd" stroke-width="1.2"/><rect x="57.5" y="1306" width="9" height="9" fill="none" stroke="#ddd" stroke-width="1.2"/>
<text x="69.5" y="1251" text-anchor="middle" dominant-baseline="central" font-size="19" fill="#ccc">Y</text><text x="122" y="1303" text-anchor="middle" dominant-baseline="central" font-size="19" fill="#ccc">X</text>
<!-- compass -->
<ellipse cx="1526" cy="216" rx="52.5" ry="53.5" fill="none" stroke="#2e2e2e" stroke-width="15"/>
<rect x="1500" y="189.5" width="51" height="51" fill="#9c9c9c"/><rect x="1510" y="199" width="32" height="32" fill="#8e8e8e"/>
<text x="1526" y="215" text-anchor="middle" dominant-baseline="central" font-size="28" fill="#666">上</text>
<g font-size="19" fill="#8a8a8a" text-anchor="middle" dominant-baseline="central"><text x="1526" y="160">北</text><text x="1526" y="273">南</text><text x="1469" y="216">西</text><text x="1583" y="216">东</text></g>
<rect x="1502.6" y="302" width="47" height="17" rx="4" fill="#6c6f78" stroke="#7e818a"/><text x="1506" y="315" font-size="11" fill="#a4a6ab">WCS</text><path d="M1537 309H1545L1541 314Z" fill="none" stroke="#a4a6ab"/>

<!-- CHROME -->
<rect x="0" y="0" width="1645" height="133" fill="#3b4453"/>
<rect x="0" y="0" width="1645" height="74" fill="#222933"/>
<rect x="0" y="0" width="1645" height="1.6" fill="#0696d7"/>
<rect x="0" y="47.5" width="1645" height="1.2" fill="#3b4453"/>
<rect x="0" y="131" width="1645" height="2" fill="#333b49"/>
<rect x="0" y="133" width="33" height="1206" fill="#3b4453"/><rect x="0" y="133" width="4" height="1206" fill="#222933"/>
<rect x="1609" y="133" width="36" height="1206" fill="#3b4453"/><rect x="1641" y="133" width="4" height="1206" fill="#222933"/>
<rect x="0" y="1339" width="1645" height="33" fill="#222933"/><rect x="0" y="1370.5" width="1645" height="1.5" fill="#0696d7"/>
<!-- title row -->
<path d="M10 23L16 5H19L24 23H20.5L19 18H15L13.5 23ZM16 15H18L17 10Z" fill="#c9302c"/>
<use href="#ca" x="32" y="15"/>
<use href="#nw" x="62" y="15"/><use href="#op" x="85" y="15"/><use href="#sv" x="110" y="15"/><use href="#sv" x="134" y="15"/><path d="M133 13L141 6L143 8L135 16Z" fill="#e8a33d"/>
<rect x="152" y="6" width="10" height="17" rx="1" fill="#8b9099"/><path d="M158 15H166V23H158Z" fill="#e8b04a"/>
<rect x="177" y="6" width="11" height="18" rx="1.5" fill="#8b9099"/><path d="M179 13H187M184 10L187 13L184 16" stroke="#6fb8ea" stroke-width="1.5" fill="none"/>
<use href="#pr" x="205.5" y="15"/><use href="#un" x="230" y="15"/><use href="#ca" x="247" y="15"/><use href="#re" x="266" y="15"/><use href="#ca" x="283" y="15"/><path d="M294 10H302M295 14H301L298 18Z" fill="#c8ccd2" stroke="#c8ccd2"/>
<path d="M311 15L328 6L323 24L319 17Z" class="bf"/><text x="331" y="20" font-size="12.5" fill="#6fb8ea">共享</text>
<text x="575" y="18.5" class="st" textLength="144" lengthAdjust="spacingAndGlyphs">Autodesk AutoCAD 2022</text><text x="735" y="18.5" class="st" textLength="111" lengthAdjust="spacingAndGlyphs">政府办公楼建筑.dwg</text>
<path d="M1065 11L1070 15L1065 19Z" fill="#c8ccd2"/>
<rect x="1077" y="5" width="178" height="20" fill="#454e5e"/><text x="1079" y="19" font-size="12" font-style="italic" fill="#aab0ba">键入关键字或短语</text>
<circle cx="1266" cy="14" r="5.5" class="i"/><path d="M1270 18L1274 22" class="i"/>
<circle cx="1292" cy="10" r="4.5" fill="#8cc8f0"/><path d="M1284 23Q1284 15 1292 15Q1300 15 1300 23Z" fill="#8cc8f0"/>
<text x="1305" y="19" font-size="13" fill="#d8dce2" textLength="81" lengthAdjust="spacingAndGlyphs">1505999135...</text><use href="#ca" x="1393" y="15"/>
<path d="M1407 8H1410L1412 18H1421L1423 11H1411" class="i"/><circle cx="1413" cy="21" r="1.3" class="f"/><circle cx="1420" cy="21" r="1.3" class="f"/>
<path d="M1430 22L1437 7L1444 22H1441L1437 15L1433 22Z" class="f"/><use href="#ca" x="1454" y="15"/>
<rect x="1467" y="7" width="1" height="17" fill="#4a5262"/>
<circle cx="1484" cy="15" r="8.5" fill="#b9bdc3"/><text x="1484" y="20" text-anchor="middle" font-size="13" font-weight="700" fill="#3b4453">?</text><use href="#ca" x="1501" y="15"/>
<path d="M1575 19H1583" stroke="#d8dce2" stroke-width="2"/><rect x="1598.5" y="9" width="11" height="11" fill="none" stroke="#d8dce2" stroke-width="1.4"/><path d="M1623 9L1635 21M1635 9L1623 21" stroke="#e2e5e9" stroke-width="1.6"/>
<!-- menu -->
<g class="mn"><text x="18" y="43">文件(F)</text><text x="80" y="43">编辑(E)</text><text x="143" y="43">视图(V)</text><text x="207" y="43">插入(I)</text><text x="267" y="43">格式(O)</text><text x="333" y="43">工具(T)</text><text x="396" y="43">绘图(D)</text><text x="461" y="43">标注(N)</text><text x="527" y="43">修改(M)</text><text x="595" y="43">参数(P)</text><text x="658" y="43">窗口(W)</text><text x="726" y="43">帮助(H)</text><text x="791" y="43">Express</text></g>
<path d="M1593 43H1600" stroke="#d8dce2" stroke-width="2"/><path d="M1610 37H1621V44M1610 37V34H1618" fill="none" stroke="#d8dce2"/><rect x="1610" y="37" width="9" height="8" fill="none" stroke="#d8dce2"/><path d="M1626 33L1638 44M1638 33L1626 44" stroke="#e2e5e9" stroke-width="1.5"/>
<!-- tabs -->
<path d="M20 75Q24 75 25 67L27 56Q28 52 32 52H144Q148 52 149 56V68Q149 75 152 75Z" fill="#2f3743"/>
<path d="M150 75Q153 75 154 67L156 56Q157 52 161 52H265Q269 52 270 56V68Q270 75 272 75Z" fill="#2f3743"/>
<path d="M271 75Q275 75 275 67L277 56Q278 52 282 52H398Q402 52 403 56V68Q403 75 405 75Z" fill="#3b4453"/>
<path d="M409 75V56Q409 53 412 53H426Q430 53 430 57V75Z" fill="#2f3743"/>
<text x="36" y="68" font-size="12.5" fill="#aeb4bd">开始</text><text x="158" y="68" font-size="12.5" fill="#aeb4bd">结构施工图*</text><text x="281" y="68" font-size="12.5" fill="#f0f2f4" font-weight="700">政府办公楼建筑*</text>
<path d="M251 59L259 67M259 59L251 67M380 59L388 67M388 59L380 67" stroke="#b5bac2" stroke-width="1.5"/><path d="M414 63.5H425M419.5 58V69" stroke="#aeb4bd" stroke-width="2"/>
<!-- toolbars row 1 -->
<rect x="5" y="78" width="645" height="24" class="tb"/><rect x="653" y="78" width="399" height="24" class="tb"/><rect x="1055" y="78" width="584" height="24" class="tb"/>
<path d="M8 81V99M657 81V99M1058 81V99" stroke="#a5aab2" stroke-width="2" stroke-dasharray="1.6 1.6"/>
<use href="#nw" x="24" y="90"/><use href="#op" x="47" y="90"/><use href="#sv" x="70" y="90"/>
<use href="#pr" x="99" y="90"/><use href="#ds" x="122" y="90"/><use href="#pr" x="145" y="90"/><circle cx="167" cy="89" r="8" fill="#6fa8cf"/><path d="M161 84Q167 92 163 97Q171 93 174 84Q169 81 161 84Z" fill="#d9a650"/>
<use href="#dc" x="196" y="90"/><path d="M192 96L200 100M200 96L192 100" stroke="#e2e5e9"/><use href="#dc" x="220" y="90"/><use href="#dc" x="242" y="90"/><rect x="239" y="80" width="6" height="3" fill="#e8a33d"/><use href="#dc" x="267" y="90"/><path d="M267 92L275 98" stroke="#e8a33d" stroke-width="2"/><rect x="282" y="85" width="14" height="12" class="i"/><path d="M289 90L297 81" stroke="#e8a33d" stroke-width="2"/>
<use href="#un" x="320" y="90"/><use href="#ca" x="337" y="90"/><use href="#re" x="356" y="90"/><use href="#ca" x="373" y="90"/>
<use href="#hd" x="396" y="90"/><use href="#tl" x="419" y="90"/><use href="#rc" x="442" y="90"/><use href="#rc" x="465" y="90"/><path d="M459 84H468M458 94H469" stroke="#6fb8ea" stroke-width="1.4"/>
<use href="#vp" x="494" y="90"/><rect x="489" y="82" width="10" height="6" class="bf"/><use href="#vp" x="518" y="90"/><use href="#vp" x="540" y="90"/><path d="M556 98L560 82L570 96Z" fill="#cfd3d8"/><rect x="579" y="81" width="9" height="9" fill="#e8b04a"/><rect x="584" y="89" width="11" height="9" class="f"/><rect x="602" y="81" width="12" height="17" fill="#9aa0aa"/><path d="M604 85H612M604 89H612M604 93H612" stroke="#3b4453" stroke-dasharray="2 1" stroke-width="2"/>
<circle cx="638" cy="90" r="8.5" fill="#b0b4ba"/><text x="638" y="95" text-anchor="middle" font-size="13" font-weight="700" fill="#3b4453">?</text>
<path class="sp" d="M84 81V99M183 81V99M303 81V99M382 81V99M480 81V99M624 81V99"/>
<path d="M664 85L676 81L680 84L668 89ZM664 91L676 87L680 90L668 95Z" class="f"/><rect x="670" y="92" width="10" height="8" fill="#cfd3d8"/>
<!-- layer combo -->
<rect x="683.5" y="79" width="299.5" height="22" fill="#fff"/>
<circle cx="694.5" cy="87" r="5" fill="#f2a720"/><rect x="692.5" y="92" width="4" height="4" fill="#c98915"/>
<circle cx="711" cy="90" r="4" fill="#f2a720"/><path d="M711 82V98M703 90H719M705 84L717 96M717 84L705 96" stroke="#f2a720"/>
<path d="M725 85V82H729M737 82H733M725 94V98H729" stroke="#666" fill="none"/><circle cx="733" cy="91" r="3" fill="#f2a720"/>
<path d="M748 90V85A4 4 0 0 1 756 85" fill="none" stroke="#f2a720" stroke-width="1.6"/><rect x="747" y="90" width="10" height="8" fill="#f2a720"/>
<rect x="763.5" y="84" width="11" height="12" fill="#808080" stroke="#111"/>
<text x="781" y="94.5" class="cb" font-size="12">填充</text><use href="#ch" x="975" y="90"/>
<path d="M988 92L998 88L1002 91L992 95ZM988 96L998 92L1002 95L992 99Z" class="f"/><circle cx="995" cy="84" r="3" class="bf"/>
<path d="M1011 92L1021 88L1025 91L1015 95ZM1011 96L1021 92L1025 95L1015 99Z" class="f"/><path d="M1012 82L1020 88" stroke="#6fb8ea" stroke-width="2"/>
<path d="M1034 88L1044 84L1048 87L1038 91Z" class="f"/><rect x="1038" y="91" width="11" height="9" class="f"/>
<!-- combos -->
<rect x="1062" y="79" width="150" height="22" fill="#fff"/><rect x="1066" y="83" width="12" height="13" fill="#808080" stroke="#111"/><text x="1083" y="94.5" class="cb">ByLayer</text><use href="#ch" x="1204" y="90"/>
<rect x="1217.6" y="79" width="160.4" height="22" fill="#fff"/><path d="M1223 90H1282" stroke="#111"/><text x="1288" y="94.5" class="cb">ByLayer</text><use href="#ch" x="1370" y="90"/>
<rect x="1384" y="79" width="125" height="22" fill="#fff"/><path d="M1389 90H1424" stroke="#111"/><text x="1430" y="94.5" class="cb">ByLayer</text><use href="#ch" x="1501" y="90"/>
<rect x="1515" y="79" width="120" height="22" fill="#f4f5f6"/><text x="1526" y="94.5" class="cb" style="fill:#8a8a8a">ByColor</text><use href="#ch" x="1627" y="90"/>
<!-- toolbars row 2 -->
<rect x="5" y="106" width="77" height="22" class="tb"/><rect x="84" y="106" width="641" height="22" class="tb"/><rect x="727" y="106" width="486" height="22" class="tb"/>
<path d="M8 109V125M87 109V125M730 109V125" stroke="#a5aab2" stroke-width="2" stroke-dasharray="1.6 1.6"/>
<use href="#dc" x="24" y="117"/><path d="M25 116L32 108" stroke="#e8a33d" stroke-width="2"/><use href="#dc" x="47" y="117"/><path d="M44 111L47 114L53 107" stroke="#6ecf6e" stroke-width="1.8" fill="none"/><path d="M63 117L74 112L78 115L67 120Z" class="f"/><rect x="67" y="118" width="10" height="7" fill="#e05656"/>
<use href="#dm" x="102" y="117"/><path d="M119 111L127 117L122 124L131 124" class="bl" stroke-width="1.5"/><path d="M142 125Q142 113 155 110" class="bl" stroke-width="1.5"/><path d="M146 125Q146 118 155 115" class="i"/><path d="M164 125H180M171 110V125M176 110V122" class="bl"/><path d="M193 125Q195 114 206 110" class="i"/><path d="M217 125Q219 114 230 110L227 120" class="i"/><circle cx="247" cy="117" r="7.5" class="i"/><path d="M242 112L252 122" class="bl"/><path d="M262 124H277L269 110V124" class="bl"/>
<use href="#dm" x="299" y="117"/><path d="M299 112L296 118H301L298 123" stroke="#f2c12e" fill="none"/><use href="#dm" x="322" y="117"/><path d="M337 110V124M344 110V124M351 110V124M337 117H351" class="bl"/><rect x="365" y="110" width="8" height="14" fill="#e8b04a"/><path d="M360 110H378M360 124H378" class="i"/><path d="M381 117H397M391 112L397 117L391 122M390 110V124" class="bl"/>
<rect x="412" y="110" width="16" height="14" class="i"/><path d="M416 117H424M416 112V122" class="i"/><circle cx="443" cy="117" r="7.5" class="i"/><path d="M443 113V121M439 117H447" class="bl"/><use href="#dm" x="465" y="115"/><path d="M462 120L465 123L470 118" stroke="#6ecf6e" stroke-width="1.6" fill="none"/><path d="M480 118L484 112L488 122L492 115L497 118" class="i"/>
<rect x="511" y="116" width="14" height="8" class="i"/><path d="M518 116L526 108" stroke="#e8a33d" stroke-width="2"/><path d="M534 124H548M537 118L541 109L545 118" class="i"/><path d="M555 110V124M571 110V124" class="i"/><circle cx="563" cy="117" r="4" fill="none" stroke="#6ecf6e"/>
<rect x="582" y="107" width="120" height="20" fill="#fff"/><text x="601" y="122" font-size="13" fill="#111" textLength="66" lengthAdjust="spacingAndGlyphs">STANDARD</text><use href="#ch" x="694.6" y="117"/><path d="M706 124H722M708 122L720 112" class="i"/>
<path class="sp" d="M186 109V125M285 109V125M406 109V125M505 109V125M579 109V125"/>
<use href="#cube" x="746" y="117"/><use href="#cube2" x="769" y="117"/><use href="#cube2" x="792" y="117"/><use href="#cube" x="813" y="117"/><path d="M822 113H826M824 117H827" stroke="#e2e5e9"/>
<g transform="translate(841 117)"><path d="M-7-7V-1M-10-4H-4" class="i"/><use href="#cube"/></g><use href="#cube2" x="867" y="117"/><use href="#cube2" x="889" y="117"/><path d="M886 110L893 116M893 110L886 116" stroke="#e05656" stroke-width="1.6"/><use href="#cube2" x="913" y="117"/><use href="#cube2" x="936" y="117"/><use href="#cube" x="958" y="117"/><use href="#cube2" x="982" y="117"/><rect x="976" y="109" width="6" height="5" fill="#e05656"/>
<path d="M1003 124V110L1012 109L1018 117V124Z" class="f"/><path d="M1027 122L1040 110L1043 114V124H1030Z" class="f"/><rect x="1052" y="113" width="13" height="11" class="f"/><rect x="1073" y="111" width="13" height="13" class="f"/><rect x="1073" y="111" width="6" height="7" fill="#e05656"/>
<path class="sp" d="M997 109V125M1095 109V125"/>
<rect x="1103" y="116" width="10" height="9" class="bl"/><path d="M1101 108V114M1098 111H1104" stroke="#6ecf6e" stroke-width="2"/><path d="M1127 124L1129 110H1137V122Z" class="f"/><path d="M1150 110V124L1154 112ZM1158 110V124L1162 114Z" class="f"/><path d="M1154 107V127" stroke="#6fb8ea"/><rect x="1171" y="110" width="14" height="14" class="f"/><rect x="1176" y="116" width="8" height="7" class="bf"/><path d="M1195 123L1197 110H1207V120L1203 124Z" class="f"/><path d="M1196 120L1199 124L1204 117" stroke="#5ec46e" stroke-width="2" fill="none"/>
<!-- left toolbar -->
<rect x="5" y="134" width="24" height="447" class="tb"/><path d="M8 137H26" stroke="#a5aab2" stroke-width="2" stroke-dasharray="1.6 1.6"/>
<g transform="translate(16 152)"><path d="M-7 7L7-7" class="i"/><path class="bd" d="M-7 7h0M7-7h0"/></g>
<g transform="translate(16 175)"><path d="M-8 8L8-8M-8 8V3M-8 8H-3M8-8V-3M8-8H3" class="i"/><path class="bd" d="M0 0h0"/></g>
<g transform="translate(16 197)"><path d="M-4 4H2A5 5 0 0 0 2-5" class="i"/><path class="bd" d="M-8 4h0M0-5h0"/></g>
<g transform="translate(16 219)"><path d="M0-8L8-2L5 7H-5L-8-2Z" class="i"/><path class="bd" d="M0 0h0M5 7h0"/></g>
<g transform="translate(16 241)"><rect x="-7" y="-6" width="14" height="12" class="i"/><path class="bd" d="M-7-6h0M7 6h0"/></g>
<g transform="translate(16 263)"><path d="M-6 7Q-4-3 7-7" class="i"/><path class="bd" d="M-6 7h0M-3-3h0M7-7h0"/></g>
<g transform="translate(16 285)"><circle r="8" class="i"/><path d="M0 0L5-5" class="bl"/><path class="bd" d="M0 0h0M5-5h0"/></g>
<path d="M10 303Q8 298 14 299Q18 296 21 300Q26 300 24 305Q26 311 20 310Q16 314 12 311Q6 310 10 303Z" class="i"/>
<g transform="translate(16 329)"><path d="M-7 7Q-7-3-3-4Q2 4 3 2Q3-5 7-7" class="i"/><path class="bd" d="M-7 7h0M-3-4h0M3 2h0M7-7h0"/></g>
<g transform="translate(16 351)"><ellipse rx="7.5" ry="5" class="i"/><path class="bd" d="M-8 0h0M8 0h0M0-5h0M0 5h0"/></g>
<g transform="translate(16 373)"><path d="M7-3A8 5 0 1 0 0 5" class="i"/><path class="bd" d="M0 0h0M7-3h0M3 3h0"/></g>
<g transform="translate(16 394)"><rect x="-8" y="-5" width="10" height="9" class="i"/><circle cx="3" cy="4" r="4" class="i"/><path d="M1-10H8L9-2V5H4V-4H1Z" class="bf"/></g>
<g transform="translate(16 418)"><rect x="-8" y="-4" width="10" height="9" class="i"/><circle cx="3" cy="4" r="4" class="i"/><path d="M5-11V-1M0-6H10M2-9L8-3M8-9L2-3" stroke="#f2c12e"/></g>
<g transform="translate(16 438)"><path class="bd" d="M0-6h0M-6 0h0M6 0h0M0 6h0" style="stroke:#c8ccd2"/></g>
<g transform="translate(16 461)"><rect x="-6" y="-6" width="12" height="12" fill="#6fb8ea" stroke="#3b4453" stroke-dasharray="2 1"/><path d="M-9-6H9M-9 6H9M-6-9V9M6-9V9" class="i"/></g>
<g transform="translate(16 483)"><rect x="-6" y="-6" width="12" height="12" fill="#6fb8ea"/><path d="M-9-6H9M-9 6H9M-6-9V9M6-9V9" class="i"/></g>
<g transform="translate(16 507)"><path d="M-8-7H4L8-2V7H-8Z" class="wf"/><circle cy="0" r="2.5" fill="#3b4453"/></g>
<g transform="translate(16 527)"><path d="M-8-7H8V7H-8ZM-8-3H8M-8 1H8M-8 4H8M-3-3V7M3-3V7" class="i"/></g>
<text x="16" y="556" text-anchor="middle" font-size="19" font-weight="700" fill="#c8ccd2">A</text>
<g transform="translate(16 571)"><circle cx="-4" cy="-4" r="3.5" fill="#5fcf88"/><circle cx="5" cy="5" r="3.5" class="bf"/><path d="M0-4H4V1" stroke="#fff" fill="none"/></g>
<!-- right toolbar -->
<rect x="1612" y="134" width="26" height="405" class="tb"/><path d="M1615 137H1633" stroke="#a5aab2" stroke-width="2" stroke-dasharray="1.6 1.6"/>
<g transform="translate(1624 153)"><path d="M-6 4L4-8L8-5L-2 7Z" fill="#e2c79b"/><path d="M-9 8H8" class="bl"/></g>
<g transform="translate(1624 175)"><circle cx="-5" cy="-4" r="2.5" class="i"/><path d="M-1-6H7V-1" class="i"/><circle cx="-2" cy="4" r="3" class="bl"/><circle cx="4" cy="4" r="3" class="bl"/></g>
<g transform="translate(1624 198)"><path d="M-2 7V-6L-8 7ZM2 7V-6L8 7Z" class="i"/><path d="M0-9V9" class="bl"/></g>
<g transform="translate(1624 219)"><path d="M8-7H-2A7 7 0 0 0-2 7H8M8-3H-2A3 3 0 0 0-2 3H8" class="bl"/></g>
<g transform="translate(1624 241)"><path d="M-8-8H-2V-2H-8ZM2-8H8V-2H2ZM-8 2H-2V8H-8ZM2 2H8V8H2Z" class="bl"/></g>
<g transform="translate(1624 263)"><path d="M0-9V9M-9 0H9M0-9L-3-6M0-9L3-6M0 9L-3 6M0 9L3 6M-9 0L-6-3M-9 0L-6 3M9 0L6-3M9 0L6 3" stroke="#e2e5e9" stroke-width="1.5" fill="none"/></g>
<g transform="translate(1624 285)"><path d="M4-6A7 7 0 1 1-3-6" class="i"/><path d="M-1-9V-4H-6" class="i"/></g>
<g transform="translate(1624 307)"><rect x="-8" y="-1" width="8" height="9" class="i"/><path d="M-8-1V-8H8V8H0" class="bl"/></g>
<g transform="translate(1624 329)"><path d="M-7-8V6H1" class="i"/><path d="M-2-8L8 6" class="i"/><path d="M-5 8H8" class="bl"/></g>
<g transform="translate(1624 351)"><path d="M-5-8L4 6M5-8L-3 6" stroke="#e2e5e9" stroke-width="1.5"/><circle cx="-4" cy="7" r="2.5" class="i"/><circle cx="5" cy="7" r="2.5" class="i"/><path d="M-9-8H9" class="bl" stroke-dasharray="2 2"/></g>
<g transform="translate(1624 373)"><path d="M8-8V8" class="i"/><path d="M-9 0H6M2-3L6 0L2 3M-9 5H5" class="i"/></g>
<g transform="translate(1624 395)"><path d="M-8-4H8V8H-8ZM1-9V-4" class="i"/></g>
<g transform="translate(1624 417)"><path d="M-8-3H-2V-9H2V-3H8V8H-8Z" fill="none" stroke="#c8ccd2" stroke-width="1.3"/></g>
<g transform="translate(1624 439)"><path d="M-9 0H-3M3 0H9M-3-3V3M3-3V3M-3 0L-6-2M3 0L6-2" class="bl"/></g>
<g transform="translate(1624 460.6)"><path d="M-7 7Q-6-3 7-7" class="i"/><path class="bd" d="M-7 7h0M7-7h0"/></g>
<g transform="translate(1624 482.6)"><path d="M-7 7Q-8-6 7-6" class="i"/><path class="bd" d="M-7 2h0M7-6h0"/></g>
<g transform="translate(1624 505)"><path d="M-8 7Q-5-6 0 0T8-7" class="bl"/></g>
<g transform="translate(1624 528)"><path d="M-7-2L-2-7H7V3L2 8H-7ZM-7-2H2V8M2-2L7-7" class="i"/><path d="M-6 4H1" class="bl"/></g>
<!-- command line -->
<rect x="333" y="1313" width="1033" height="25" fill="#fff" opacity=".68"/>
<rect x="277" y="1312" width="56" height="26" fill="#3b4453" opacity=".88"/>
<path d="M283.5 1315V1336" stroke="#c0c4ca" stroke-width="3" stroke-dasharray="2 1.5"/>
<path d="M291 1320L301 1330M301 1320L291 1330" stroke="#d8dce2" stroke-width="1.7"/>
<path d="M313 1335L321 1324Q320 1317 326 1317L323 1321L326 1323L329 1320Q330 1326 323 1326L316 1336Z" class="f"/>
<rect x="338" y="1320" width="12" height="12" fill="#3b4453" stroke="#333"/><path d="M338 1323H350" stroke="#ddd"/><path d="M356 1324.5H362L359 1327.5Z" fill="#444"/>
<text x="371" y="1329" font-size="13" font-style="italic" fill="#666">键入命令</text>
<path d="M1354 1327H1362L1358 1322Z" fill="#555"/>
<!-- status bar left -->
<path d="M18 1357Q22 1357 22 1350V1345Q22 1342 26 1342H58Q62 1342 62 1346V1350Q62 1355 64 1357Z" fill="#3b4453"/>
<path d="M66 1357Q70 1357 70 1350V1345Q70 1342 74 1342H110Q114 1342 114 1346V1350Q114 1355 116 1357Z" fill="#2f3743"/>
<path d="M122 1357V1345Q122 1342 126 1342H138Q142 1342 142 1346V1353Q142 1357 138 1357Z" fill="#2f3743"/>
<text x="27" y="1354" font-size="12.5" font-weight="700" fill="#fff">模型</text><text x="74" y="1354" font-size="12.5" fill="#b5bac2">布局1</text>
<path d="M128 1349.5H137M132.5 1345V1354" stroke="#b5bac2" stroke-width="2"/>
<!-- status bar right -->
<rect x="441" y="1341" width="139.5" height="24" fill="#3b4453"/><rect x="584" y="1341" width="29" height="24" fill="#3b4453"/><rect x="617" y="1341" width="63" height="24" fill="#3b4453"/><rect x="684" y="1341" width="334" height="24" fill="#3b4453"/><rect x="1022" y="1341" width="102" height="24" fill="#3b4453"/><rect x="1128" y="1341" width="146" height="24" fill="#3b4453"/><rect x="1277" y="1341" width="65" height="24" fill="#3b4453"/><rect x="1346" y="1341" width="96" height="24" fill="#3b4453"/><rect x="1445" y="1341" width="23" height="24" fill="#3b4453"/><rect x="1471" y="1341" width="41" height="24" fill="#3b4453"/><rect x="1513" y="1341" width="24" height="24" fill="#3b4453"/><rect x="1539" y="1341" width="24" height="24" fill="#3b4453"/><rect x="1565" y="1341" width="23" height="24" fill="#3b4453"/><rect x="1590" y="1341" width="50" height="24" fill="#3b4453"/>
<rect x="710" y="1341" width="22" height="24" fill="#5b8cbd"/><rect x="865" y="1341" width="21" height="24" fill="#5b8cbd"/><rect x="929.5" y="1341" width="22" height="24" fill="#5b8cbd"/><rect x="1022.6" y="1341" width="22.4" height="24" fill="#5b8cbd"/><rect x="1087" y="1341" width="22.5" height="24" fill="#5b8cbd"/><rect x="1129.5" y="1341" width="23" height="24" fill="#5b8cbd"/><rect x="1539.5" y="1341" width="22.5" height="24" fill="#5b8cbd"/>
<path class="sp" d="M709 1341V1365M733 1341V1365M838.5 1341V1365M902 1341V1365M928 1341V1365M953 1341V1365"/>
<text x="576" y="1358" text-anchor="end" font-size="13" fill="#e2e5e9" textLength="107" lengthAdjust="spacingAndGlyphs">960033, -667328, 0</text>
<text x="598.5" y="1358" text-anchor="middle" font-size="13" fill="#e2e5e9">模型</text>
<path d="M621 1345V1361M628 1345V1361M635 1345V1361M620 1349H636M620 1353H636M620 1357H636" stroke="#e2e5e9"/><path d="M646 1347H660M646 1353H660M646 1359H660" stroke="#e2e5e9" stroke-width="2.2" stroke-dasharray="2 3"/><use href="#ca" x="672.6" y="1353"/>
<rect x="688" y="1356" width="8" height="8" class="wf"/><rect x="696" y="1347" width="8" height="8" fill="none" stroke="#e2e5e9"/>
<path d="M716 1347V1355M713 1351H720" stroke="#fff"/><rect x="720" y="1355" width="9" height="5" fill="#fff"/>
<path d="M739 1345V1361H753" class="i"/><path d="M739 1355H744V1361" class="i" stroke-width="1"/>
<circle cx="768" cy="1354" r="6" class="i"/><path d="M768 1354L776 1345M768 1354H776" class="i"/><use href="#ca" x="790" y="1353"/>
<path d="M804 1344L815 1362M808 1356L812 1350" stroke="#e05656" stroke-width="1.2"/><circle cx="810" cy="1353" r="1.5" fill="#5ec46e"/><use href="#ca" x="830.5" y="1353"/>
<path d="M844 1361H859M844 1361L856 1347" class="i"/>
<rect x="869" y="1348" width="14" height="13" fill="none" stroke="#fff"/><rect x="867" y="1345" width="4" height="4" fill="#3b4453" stroke="#fff"/><use href="#ca" x="895" y="1353"/>
<path d="M908 1347H924M908 1353H918M908 1359H914" stroke="#e2e5e9" stroke-width="2.6"/>
<rect x="934" y="1345" width="13" height="15" fill="#fff"/><path d="M934 1347H947M934 1352H947M934 1357H947" stroke="#5b8cbd" stroke-width="2" stroke-dasharray="2 2"/>
<rect x="961" y="1349" width="10" height="12" fill="#7fcf9f"/><path d="M958 1345V1351M955 1348H961" stroke="#e2e5e9"/>
<path d="M987 1351L993 1345H1000V1356L994 1361H987ZM987 1351H994V1361" class="i"/><rect x="984" y="1356" width="5" height="5" fill="none" stroke="#e8a36b"/><use href="#ca" x="1011" y="1353"/>
<path d="M1029 1345V1361H1040M1029 1361L1036 1353" stroke="#fff" fill="none" stroke-width="1.4"/><path d="M1026 1347L1029 1344L1032 1347M1038 1358L1041 1361L1038 1364" stroke="#fff" fill="none"/>
<path d="M1052 1346H1065V1360H1052Z" stroke="#c8ccd2" fill="none" stroke-dasharray="3 2"/><path class="bd" d="M1052 1346h0M1065 1346h0M1052 1360h0M1065 1360h0"/><use href="#ca" x="1078" y="1353"/>
<path d="M1098 1344L1106 1350V1359L1098 1363L1090 1359V1350ZM1098 1344V1354L1090 1359M1098 1354L1106 1359" fill="none" stroke="#fff"/><use href="#ca" x="1118" y="1353"/>
<path d="M1133 1363L1139 1346L1145 1363M1137 1355H1141" stroke="#fff" stroke-width="2" fill="none"/><circle cx="1147" cy="1347" r="2.5" fill="none" stroke="#fff"/>
<path d="M1159 1363L1165 1346L1171 1363" stroke="#c8ccd2" stroke-width="2" fill="none"/><path d="M1169 1345V1351" stroke="#e2e5e9"/><path d="M1184 1363L1189.5 1346L1195 1363" stroke="#c8ccd2" stroke-width="2" fill="none"/>
<text x="1206" y="1358" font-size="13" fill="#d8dce2" textLength="53" lengthAdjust="spacingAndGlyphs">1:1 / 100%</text><use href="#ca" x="1267" y="1353"/>
<circle cx="1289.5" cy="1353" r="5" fill="none" stroke="#c8ccd2" stroke-width="3.4"/><circle cx="1289.5" cy="1353" r="7" fill="none" stroke="#c8ccd2" stroke-width="2" stroke-dasharray="2.5 3"/><use href="#ca" x="1309" y="1353"/>
<path d="M1330.5 1344V1362M1322 1353H1339" stroke="#e2e5e9" stroke-width="1.6"/>
<path d="M1354 1344H1362V1362H1354Z" class="f"/><path d="M1358 1347H1362M1358 1351H1362M1358 1355H1362M1358 1359H1362" stroke="#3b4453"/>
<text x="1387" y="1358" text-anchor="middle" font-size="12.5" fill="#e2e5e9">小数</text><use href="#ca" x="1435" y="1353"/>
<rect x="1450" y="1345" width="12" height="16" class="i"/><path d="M1452 1349H1460M1452 1353H1460M1452 1357H1460" stroke="#c8ccd2" stroke-dasharray="1.5 1.5"/>
<path d="M1478 1360V1345H1492V1352M1478 1349H1492" class="i"/><rect x="1485" y="1355" width="7" height="6" class="i"/><use href="#ca" x="1503" y="1353"/>
<rect x="1517" y="1345" width="6" height="6" class="i"/><circle cx="1530" cy="1350" r="3" class="i"/><path d="M1523 1361L1526 1355L1529 1361Z" class="i"/>
<circle cx="1551" cy="1353" r="8" fill="none" stroke="#fff"/><path d="M1546 1358L1556 1348" stroke="#fff" stroke-width="1.6"/>
<path d="M1572 1345H1578V1352H1572ZM1576 1343V1349" stroke="#6fb8ea" fill="none"/><rect x="1568" y="1355" width="7" height="7" fill="#e8b04a"/><path d="M1575 1358L1578 1362L1584 1354" stroke="#5ec46e" stroke-width="1.8" fill="none"/>
<rect x="1595" y="1346" width="15" height="14" class="i"/><path d="M1598 1357L1607 1349M1603 1349H1607V1353M1598 1353V1357H1602" stroke="#e2e5e9" fill="none"/>
<path d="M1620 1346H1636M1620 1353H1636M1620 1360H1636" stroke="#e2e5e9" stroke-width="2.2"/>
</svg>
</body></html>
